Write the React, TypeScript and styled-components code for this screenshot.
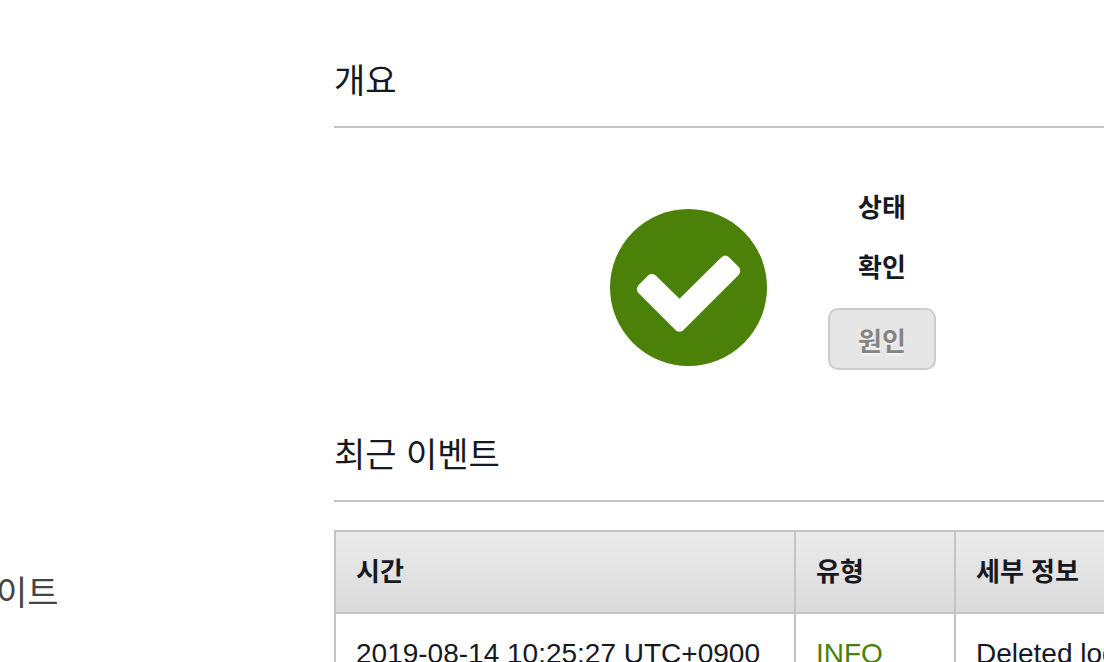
import React from 'react';
import styled, { createGlobalStyle } from 'styled-components';

const GlobalStyle = createGlobalStyle`
  *, *::before, *::after { box-sizing: border-box; }
  body {
    margin: 0;
    background: #fff;
    color: #16191f;
    font-family: 'Liberation Sans', 'Noto Sans CJK KR', sans-serif;
  }
`;

const Page = styled.div`
  display: flex;
  height: 100vh;
  overflow: hidden;
`;

const Sidebar = styled.nav`
  flex: 0 0 334px;
  padding-top: 568px;
  overflow: hidden;
`;

const SideLink = styled.a`
  display: block;
  margin-left: -4px;
  color: #444;
  font-size: 34px;
  line-height: 50px;
  text-decoration: none;
`;

const Content = styled.main`
  flex: 1 1 0;
  min-width: 0;
  padding-top: 56px;
`;

const SectionTitle = styled.h2`
  margin: 0;
  padding-bottom: 20px;
  border-bottom: 2px solid #c4c4c4;
  font-size: 34px;
  font-weight: 400;
  line-height: 50px;
`;

const Overview = styled.div`
  display: flex;
  align-items: center;
  gap: 61px;
  padding: 60px 0 60px 276px;
`;

const StatusIcon = styled.svg`
  flex: none;
  display: block;
  width: 157px;
  height: 157px;
  margin-top: 16px;
`;

const StatusInfo = styled.div`
  display: flex;
  flex-direction: column;
  align-items: center;
  gap: 20px;
`;

const StatusText = styled.strong`
  font-size: 26px;
  font-weight: 700;
  line-height: 40px;
`;

const CauseButton = styled.button`
  width: 108px;
  height: 62px;
  padding: 5px 0 0;
  border: 2px solid #ccc;
  border-radius: 10px;
  background: #e6e6e6;
  color: #848484;
  font: inherit;
  font-size: 26px;
  font-weight: 700;
  line-height: 40px;
  text-shadow: 0 2px 2px #f5f5f5;
`;

const EventTable = styled.table`
  width: 100%;
  margin-top: 28px;
  border-collapse: separate;
  border-spacing: 0;
  border-top: 2px solid #c4c4c4;
  table-layout: fixed;
`;

const HeaderRow = styled.tr`
  background: linear-gradient(#ebebeb, #dadada);
`;

const HeaderCell = styled.th<{ $width?: number }>`
  width: ${({ $width }) => ($width ? `${$width}px` : 'auto')};
  height: 82px;
  padding: 0 20px;
  border-left: 2px solid #c4c4c4;
  border-bottom: 2px solid #c4c4c4;
  font-size: 26px;
  font-weight: 700;
  line-height: 40px;
  text-align: left;
  white-space: nowrap;
`;

const Cell = styled.td<{ $info?: boolean }>`
  padding: 20px 0 20px 20px;
  border-left: 2px solid #c4c4c4;
  border-bottom: 2px solid #c4c4c4;
  color: ${({ $info }) => ($info ? '#4b8108' : 'inherit')};
  font-size: 28px;
  line-height: 40px;
  overflow: hidden;
  white-space: nowrap;
`;

export default function App() {
  return (
    <>
      <GlobalStyle />
      <Page>
        <Sidebar>
          <SideLink href="#">이트</SideLink>
        </Sidebar>
        <Content>
          <section>
            <SectionTitle>개요</SectionTitle>
            <Overview>
              <StatusIcon viewBox="0 0 157 157" aria-hidden="true">
                <circle cx="78.5" cy="78.5" r="78.5" fill="#4b8108" />
                <path
                  fill="#fff"
                  d="M28.2 76.5 C26.4 78.5 26.4 81.8 28.2 83.8 L65 120.6 C67.5 123.6 71.5 123.6 74 120.6 L128.3 66.3 C130.9 63.8 130.9 60.2 128.3 57.5 L119.2 48.6 C117 46.2 113.4 46.2 111.2 48.6 L69.5 89.8 L46 66.8 C43.6 64.3 40.2 64.3 37.8 66.8 Z"
                />
              </StatusIcon>
              <StatusInfo>
                <StatusText>상태</StatusText>
                <StatusText>확인</StatusText>
                <CauseButton type="button">원인</CauseButton>
              </StatusInfo>
            </Overview>
          </section>
          <section>
            <SectionTitle>최근 이벤트</SectionTitle>
            <EventTable>
              <thead>
                <HeaderRow>
                  <HeaderCell scope="col" $width={460}>시간</HeaderCell>
                  <HeaderCell scope="col" $width={160}>유형</HeaderCell>
                  <HeaderCell scope="col">세부 정보</HeaderCell>
                </HeaderRow>
              </thead>
              <tbody>
                <tr>
                  <Cell>2019-08-14 10:25:27 UTC+0900</Cell>
                  <Cell $info>INFO</Cell>
                  <Cell>Deleted log</Cell>
                </tr>
              </tbody>
            </EventTable>
          </section>
        </Content>
      </Page>
    </>
  );
}
